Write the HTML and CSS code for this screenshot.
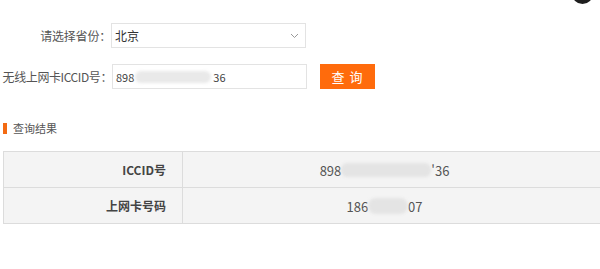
FILE: index.html
```html
<!DOCTYPE html>
<html lang="zh-CN">
<head>
<meta charset="utf-8">
<title>查询</title>
<link rel="stylesheet" href="styles.css">
</head>
<body>
<div class="corner-dot"></div>
<div class="page">
  <div class="form">
    <div class="row">
      <label class="label">请选择省份：</label>
      <div class="select">
        <span class="select-value">北京</span>
        <svg class="chevron" width="9" height="6" viewBox="0 0 9 6"><path d="M1 1l3.5 3.5L8 1" fill="none" stroke="#999" stroke-width="1"/></svg>
      </div>
    </div>
    <div class="row row-second">
      <label class="label">无线上网卡ICCID号：</label>
      <div class="input"><span>898</span><span class="mask mask-input"></span><span>36</span></div>
      <button class="btn">查 询</button>
    </div>
  </div>
  <div class="section-title"><span class="bar"></span><span class="title-text">查询结果</span></div>
  <div class="table-wrap">
    <table class="result">
      <tr>
        <th>ICCID号</th>
        <td><span>898</span><span class="mask mask-a"></span><span>'36</span></td>
      </tr>
      <tr>
        <th>上网卡号码</th>
        <td><span>186</span><span class="mask mask-b"></span><span>07</span></td>
      </tr>
    </table>
  </div>
</div>
</body>
</html>
```

FILE: styles.css
```css
html, body {
  margin: 0;
  padding: 0;
  background: #fff;
  overflow: hidden;
}
body {
  font-family: "Noto Sans CJK SC", "Noto Sans", sans-serif;
  font-size: 12px;
  color: #555;
  width: 600px;
  height: 269px;
  position: relative;
}
.corner-dot {
  position: absolute;
  left: 572px;
  top: -17px;
  width: 21px;
  height: 21px;
  border-radius: 50%;
  background: #1e1e1e;
}
.page {
  padding-top: 23px;
}
.form {
  display: flex;
  flex-direction: column;
  gap: 16px;
}
.row {
  display: flex;
  align-items: center;
  height: 25px;
}
.label {
  width: 111px;
  flex: none;
  text-align: right;
  white-space: nowrap;
  color: #555;
  letter-spacing: -0.2px;
}
.select {
  box-sizing: border-box;
  width: 195px;
  height: 25px;
  border: 1px solid #e3e3e3;
  display: flex;
  align-items: center;
  justify-content: space-between;
  padding: 0 6px 0 3px;
  color: #333;
}
.row-second .label {
  width: 112px;
  letter-spacing: -0.4px;
}
.input {
  box-sizing: border-box;
  width: 195px;
  height: 25px;
  border: 1px solid #e3e3e3;
  display: flex;
  align-items: center;
  padding-left: 3px;
  font-size: 11px;
  color: #444;
}
.mask {
  display: inline-block;
  height: 12px;
  background: #e4e4e4;
  border-radius: 6px;
  filter: blur(1.5px);
}
.mask-input {
  width: 76px;
  margin: 0 2px 0 1px;
  background: #e9e9e9;
}
.btn {
  margin-left: 13px;
  width: 55px;
  height: 25px;
  border: 0;
  padding: 0;
  background: #ff6b0c;
  color: #fff;
  font-family: inherit;
  font-size: 13px;
  letter-spacing: 1px;
}
.section-title {
  display: flex;
  align-items: center;
  margin-top: 33px;
  padding-left: 3px;
  height: 12px;
}
.bar {
  width: 4px;
  height: 11px;
  background: #f36a12;
}
.title-text {
  margin-left: 6px;
  font-size: 11px;
  color: #555;
}
.table-wrap {
  margin-top: 17px;
  padding-left: 3px;
}
.result {
  border-collapse: collapse;
  width: 620px;
  background: #f4f4f4;
}
.result th, .result td {
  border: 1px solid #dcdcdc;
  height: 35px;
  padding: 0;
}
.result th {
  width: 162px;
  text-align: right;
  padding-right: 16px;
  font-weight: bold;
  color: #444;
}
.result td {
  text-align: center;
  padding-right: 36px;
  color: #555;
  font-size: 13px;
}
.result td span {
  vertical-align: middle;
}
.mask-a {
  width: 90px;
  height: 14px;
}
.mask-b {
  width: 40px;
  height: 16px;
  border-radius: 8px;
}
```
